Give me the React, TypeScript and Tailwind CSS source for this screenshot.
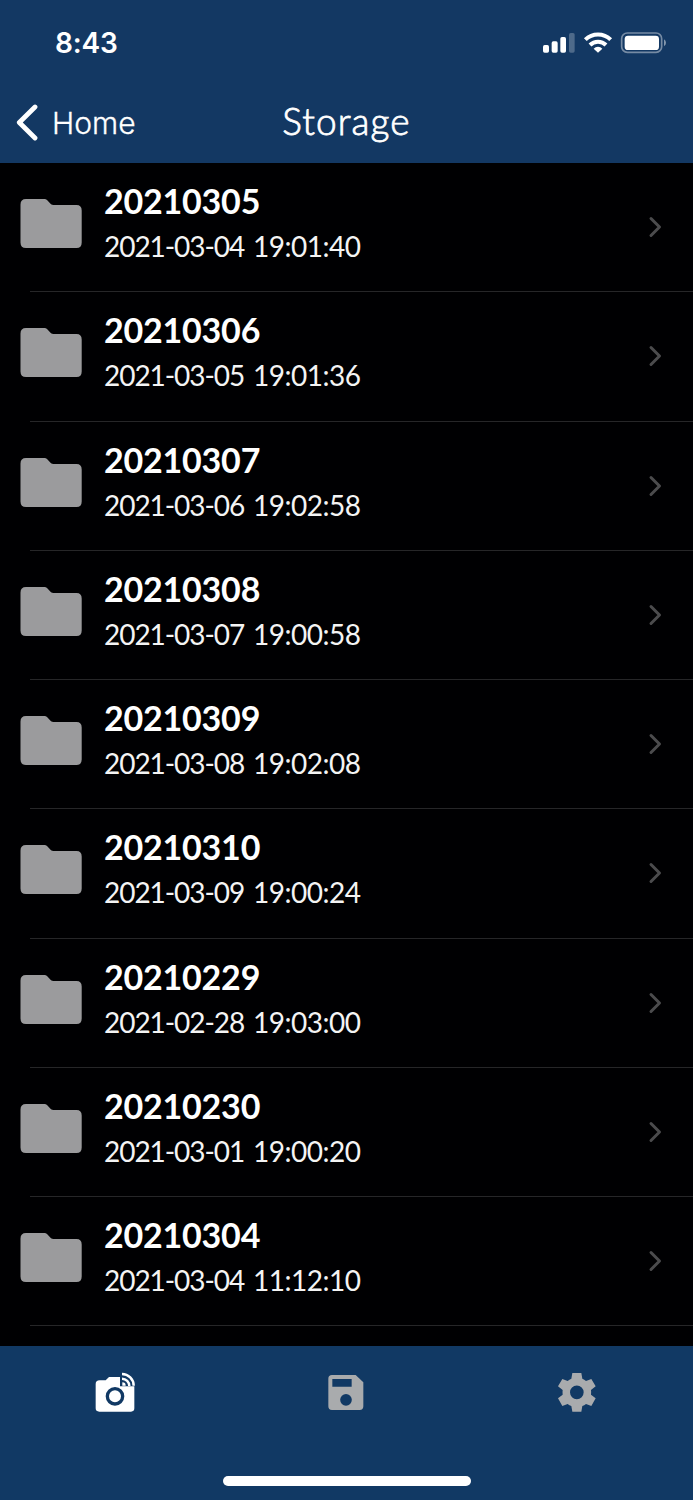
import React from "react";

type Folder = { name: string; date: string; time: string };

const folders: Folder[] = [
  { name: "20210305", date: "2021-03-04", time: "19:01:40" },
  { name: "20210306", date: "2021-03-05", time: "19:01:36" },
  { name: "20210307", date: "2021-03-06", time: "19:02:58" },
  { name: "20210308", date: "2021-03-07", time: "19:00:58" },
  { name: "20210309", date: "2021-03-08", time: "19:02:08" },
  { name: "20210310", date: "2021-03-09", time: "19:00:24" },
  { name: "20210229", date: "2021-02-28", time: "19:03:00" },
  { name: "20210230", date: "2021-03-01", time: "19:00:20" },
  { name: "20210304", date: "2021-03-04", time: "11:12:10" },
];

function StatusIcons() {
  return (
    <svg className="h-[50px] w-[173px]" viewBox="0 0 519 150" fill="#fff">
      <rect x="69" y="75" width="18" height="23" rx="5" />
      <rect x="95" y="64" width="18" height="34" rx="5" />
      <rect x="121" y="51" width="17" height="47" rx="5" />
      <rect x="147" y="39" width="17" height="59" rx="5" opacity=".25" />
      <g fill="none" stroke="#fff" strokeWidth="12">
        <path d="M196 59 A54 54 0 0 1 272 59" />
        <path d="M210 75 A34 34 0 0 1 258 75" />
      </g>
      <path d="M221 86 A18 18 0 0 1 247 86 L234 98 Z" />
      <rect x="305" y="39" width="120" height="58" rx="17" fill="none" stroke="#fff" strokeOpacity=".42" strokeWidth="5" />
      <rect x="314" y="47" width="103" height="43" rx="10" />
      <path d="M432 58 Q438 62 438 68 Q438 74 432 79 Z" opacity=".48" />
    </svg>
  );
}

function FolderIcon() {
  return (
    <svg className="mt-[35px] ml-[20px] h-[51px] w-[63px] shrink-0" viewBox="0 0 63 51">
      <path
        d="M6 1 H24.5 Q26 1 27 2 L31 6.2 Q32 7 33.5 7 H56.5 Q61.7 7 61.7 12.5 V44.5 Q61.7 50 56.5 50 H6 Q.5 50 .5 44.5 V6.5 Q.5 1 6 1 Z"
        fill="#9b9b9d"
      />
    </svg>
  );
}

function FolderRow({ name, date, time }: Folder) {
  return (
    <li className="flex h-[129.25px]">
      <FolderIcon />
      <div className="ml-[-53px] flex flex-1 border-b border-[#262628] pl-[74px]">
        <div className="flex-1 pt-[17px] font-['Lato',sans-serif] text-white">
          <div className="h-[42px] text-[34px] leading-[42px] font-bold tracking-[-0.2px]">{name}</div>
          <div className="mt-[6px] flex h-[36px] text-[28px] leading-[36px] text-[#f4f4f4]">
            <span className="w-[149px] tracking-[-1.05px]">{date}</span>
            <span className="tracking-[-0.5px]">{time}</span>
          </div>
        </div>
        <svg className="mt-[52px] mr-[30px] h-[24px] w-[16px]" viewBox="0 0 16 24" fill="none" stroke="#4b4b4d" strokeWidth="3" strokeLinecap="round" strokeLinejoin="round">
          <path d="M4 3.5 L12.5 12 L4 20.5" />
        </svg>
      </div>
    </li>
  );
}

function CameraIcon() {
  return (
    <svg className="h-[65px] w-[70px]" viewBox="0 0 210 195">
      <path
        d="M59 61 H77 L87 51 H120 V79 H163 V145 Q163 155 153 155 H58 Q47 155 47 145 V72 Q47 61 59 61 Z"
        fill="#fff"
      />
      <circle cx="105" cy="109" r="23" fill="none" stroke="#113964" strokeWidth="10" />
      <path d="M127 67 A10 10 0 0 1 137 77 H127 Z" fill="#fff" />
      <g fill="none" stroke="#fff" strokeWidth="7.5">
        <path d="M126 56 A22 22 0 0 1 148 78" />
        <path d="M126 42 A35 35 0 0 1 161 77" />
      </g>
    </svg>
  );
}

function SaveIcon() {
  return (
    <svg className="h-[65px] w-[70px]" viewBox="0 0 210 195">
      <path
        fillRule="evenodd"
        d="M51 45 H122 L145 67 V139 Q145 150 134 150 H51 Q40 150 40 139 V56 Q40 45 51 45 Z M52 57 V80 H110 V57 Z M93 102 A17.5 17.5 0 1 0 93 137 A17.5 17.5 0 1 0 93 102 Z"
        fill="#a9abad"
      />
    </svg>
  );
}

function GearIcon() {
  return (
    <svg className="h-[65px] w-[70px]" viewBox="0 0 210 195">
      <path
        fillRule="evenodd"
        d="M82 39 H109 L112 56 Q118 59 123 63 L139 57 L152 79 L138 90 Q139 97 138 104 L152 115 L139 138 L123 132 Q118 136 112 138 L109 155 H82 L79 138 Q73 136 68 132 L52 138 L39 115 L53 104 Q52 97 53 90 L39 79 L52 57 L68 63 Q73 59 79 56 Z M95.5 76.5 A20.5 20.5 0 1 0 95.5 117.5 A20.5 20.5 0 1 0 95.5 76.5 Z"
        fill="#a9abad"
      />
    </svg>
  );
}

export default function App() {
  return (
    <div className="flex h-[1500px] w-[693px] flex-col overflow-hidden bg-[#000002]">
      <header className="h-[163px] shrink-0 bg-[#133863] text-white">
        <div className="flex h-[82px] justify-between pt-[20px]">
          <div className="pl-[55px] font-['Inter',sans-serif] text-[28px] leading-[46px] font-semibold tracking-[-0.2px]">8:43</div>
          <StatusIcons />
        </div>
        <div className="grid h-[79px] grid-cols-3">
          <div className="flex items-center pl-[15px]">
            <svg className="h-[38px] w-[24px]" viewBox="0 0 24 38" fill="none" stroke="#fff" strokeWidth="4.8" strokeLinecap="round" strokeLinejoin="round">
              <path d="M20 4 L4.3 19.5 L20 35" />
            </svg>
            <span className="ml-[13px] pt-[2px] font-['Inter',sans-serif] text-[30px] leading-[40px] font-light [-webkit-text-stroke:0.3px_#fff]">Home</span>
          </div>
          <div className="flex items-center justify-center pb-[1px] font-['Lato',sans-serif] text-[37px] leading-[44px] font-light tracking-[1.1px] [-webkit-text-stroke:0.8px_#fff]">Storage</div>
        </div>
      </header>
      <ul className="h-[1183px] shrink-0">
        {folders.map((f) => (
          <FolderRow key={f.name} {...f} />
        ))}
      </ul>
      <footer className="flex flex-1 flex-col bg-[#113964]">
        <nav className="flex h-[130px] pt-[14px]">
          <div className="w-[235px] pl-[80px]"><CameraIcon /></div>
          <div className="w-[230px] pl-[80px]"><SaveIcon /></div>
          <div className="flex-1 pl-[80px]"><GearIcon /></div>
        </nav>
        <div className="ml-[223px] h-[9.5px] w-[247.5px] rounded-full bg-white" />
      </footer>
    </div>
  );
}
